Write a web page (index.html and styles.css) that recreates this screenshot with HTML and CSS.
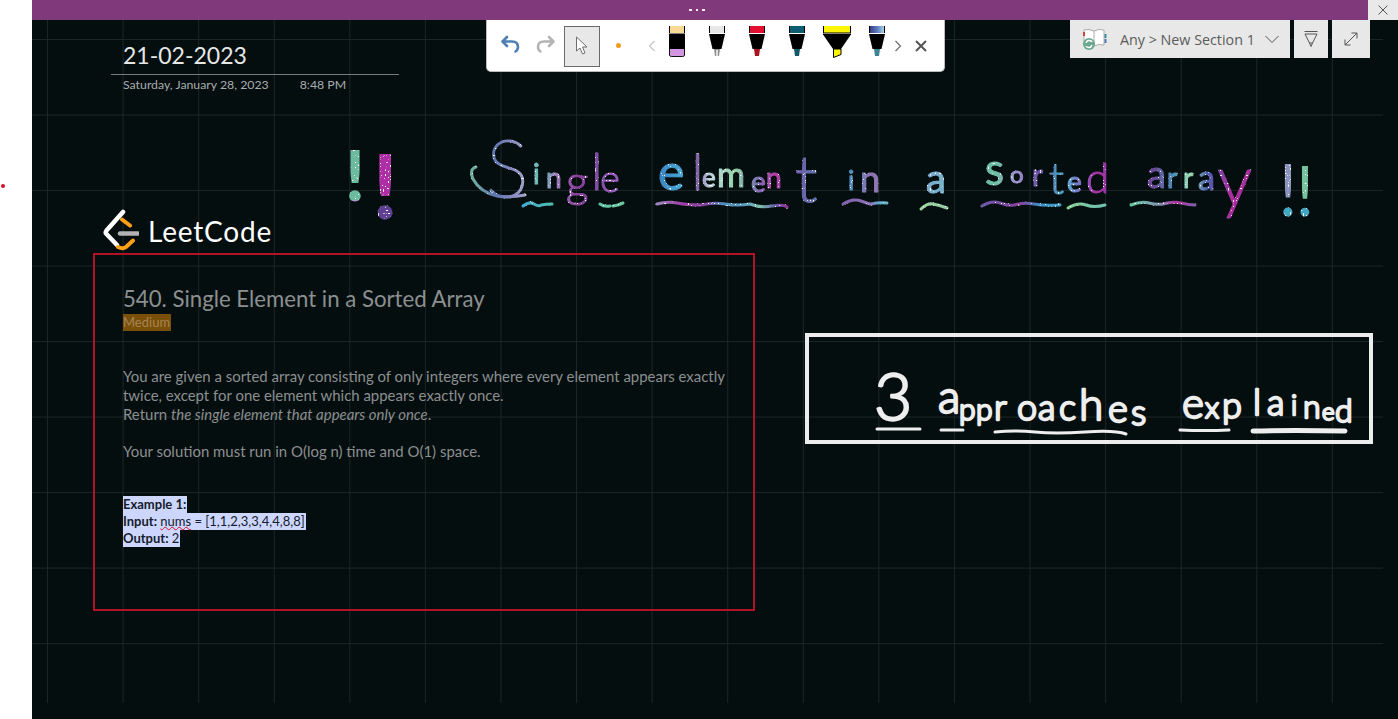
FILE: index.html
```html
<!DOCTYPE html>
<html lang="en">
<head>
<meta charset="utf-8">
<title>21-02-2023 - OneNote</title>
<link rel="stylesheet" href="styles.css">
</head>
<body>
<div class="app">
  <aside class="gutter"><span class="gutter-dot"></span></aside>
  <div class="window">
    <header class="titlebar">
      <span class="grip">
        <i></i><i></i><i></i>
      </span>
      <button class="win-close" aria-label="Close">
        <svg width="10" height="10" viewBox="0 0 10 10"><path class="ic-thin" d="M.5.5l9 9M9.5.5l-9 9"/></svg>
      </button>
    </header>
    <main class="canvas">
      <div class="grid"></div>

      <section class="note-title">
        <h1 class="page-name">21-02-2023</h1>
        <div class="page-meta"><span>Saturday, January 28, 2023</span><span>8:48 PM</span></div>
      </section>

      <div class="logo">
        <svg width="36" height="42" viewBox="0 0 36 42">
          <path class="lg-white" d="M20 3 3.500 21.500q-1.500 2 0 3.500L14 36"/>
          <path class="lg-orange" d="M19 10.500l8 6M15 38q5 2.500 8 0l7-6.500"/>
          <path class="lg-gray" d="M17 24.500h18"/>
        </svg>
        <span class="logo-text">LeetCode</span>
      </div>

      <section class="problem">
        <h2 class="p-title">540. Single Element in a Sorted Array</h2>
        <div class="p-level"><span>Medium</span></div>
        <p class="p-text">You are given a sorted array consisting of only integers where every element appears exactly<br>twice, except for one element which appears exactly once.<br>Return <em>the single element that appears only once</em>.</p>
        <p class="p-text p-gap">Your solution must run in O(log n) time and O(1) space.</p>
        <div class="p-example">
          <div class="ex-line"><span class="sel"><b>Example 1:</b></span></div>
          <div class="ex-line top"><span class="sel"><b>Input:</b> <u class="spell">nums</u> = [1,1,2,3,3,4,4,8,8]</span></div>
          <div class="ex-line"><span class="sel"><b>Output:</b> 2</span></div>
        </div>
      </section>

      <div class="approach-box"></div>

      <svg class="ink" width="1366" height="699" viewBox="32 20 1366 699">
        <defs>
          <linearGradient id="inkG" gradientUnits="userSpaceOnUse" x1="400" y1="0" x2="1400" y2="0">
            <stop offset=".07" stop-color="#6fb39b"/><stop offset=".095" stop-color="#5f75b0"/><stop offset=".115" stop-color="#8e8ec4"/><stop offset=".13" stop-color="#a9b0c8"/><stop offset=".14" stop-color="#4fbfb0"/><stop offset=".155" stop-color="#a083c0"/><stop offset=".178" stop-color="#8a3d9c"/><stop offset=".2" stop-color="#7d4fa5"/><stop offset=".212" stop-color="#a05ac0"/><stop offset=".26" stop-color="#3a86c4"/><stop offset=".282" stop-color="#48a8d4"/><stop offset=".297" stop-color="#8660a8"/><stop offset=".31" stop-color="#bcd6e0"/><stop offset=".335" stop-color="#92d4a8"/><stop offset=".357" stop-color="#7a74b4"/><stop offset=".375" stop-color="#b93ba8"/><stop offset=".4" stop-color="#6a62a8"/><stop offset=".45" stop-color="#4d8fc0"/><stop offset=".47" stop-color="#9070b0"/><stop offset=".535" stop-color="#7ab0d0"/><stop offset=".595" stop-color="#6cc0a0"/><stop offset=".617" stop-color="#a090d0"/><stop offset=".64" stop-color="#6b4fa8"/><stop offset=".658" stop-color="#4a9cc0"/><stop offset=".668" stop-color="#5fa8d8"/><stop offset=".695" stop-color="#a830a8"/><stop offset=".755" stop-color="#6a4a96"/><stop offset=".775" stop-color="#4a98c0"/><stop offset=".79" stop-color="#a0e0b0"/><stop offset=".807" stop-color="#4a5fb0"/><stop offset=".83" stop-color="#a82f9e"/>
          </linearGradient>
          <linearGradient id="underG" gradientUnits="userSpaceOnUse" x1="400" y1="0" x2="1400" y2="0">
            <stop offset=".123" stop-color="#3fa8d0"/><stop offset=".152" stop-color="#50c0b0"/><stop offset=".223" stop-color="#6ac8a0"/><stop offset=".257" stop-color="#9a86b8"/><stop offset=".28" stop-color="#a040a8"/><stop offset=".305" stop-color="#8a40a0"/><stop offset=".325" stop-color="#4a90c0"/><stop offset=".345" stop-color="#5aa0c0"/><stop offset=".36" stop-color="#80c0a8"/><stop offset=".375" stop-color="#6060a8"/><stop offset=".387" stop-color="#9a3098"/><stop offset=".443" stop-color="#8060b0"/><stop offset=".47" stop-color="#9070b8"/><stop offset=".48" stop-color="#60b0d0"/><stop offset=".52" stop-color="#a0d8a0"/><stop offset=".547" stop-color="#90c8a0"/><stop offset=".582" stop-color="#6a58a8"/><stop offset=".62" stop-color="#8a3fa0"/><stop offset=".64" stop-color="#3a90c8"/><stop offset=".66" stop-color="#40a0c8"/><stop offset=".667" stop-color="#80d090"/><stop offset=".7" stop-color="#70c0b0"/><stop offset=".73" stop-color="#60c8a0"/><stop offset=".76" stop-color="#8090b0"/><stop offset=".775" stop-color="#b030a0"/><stop offset=".795" stop-color="#8060a8"/>
          </linearGradient>
          <linearGradient id="bangA" gradientUnits="userSpaceOnUse" x1="0" y1="140" x2="0" y2="215">
            <stop offset=".8" stop-color="#6dbb9f"/><stop offset=".8" stop-color="#a796c4"/>
          </linearGradient>
          <linearGradient id="bangB" gradientUnits="userSpaceOnUse" x1="0" y1="140" x2="0" y2="225">
            <stop offset=".75" stop-color="#ae2ea6"/><stop offset=".75" stop-color="#5f3f90"/>
          </linearGradient>
          <linearGradient id="bangC" gradientUnits="userSpaceOnUse" x1="0" y1="160" x2="0" y2="220">
            <stop offset=".75" stop-color="#8a94bc"/><stop offset=".75" stop-color="#3fa6c2"/>
          </linearGradient>
          <linearGradient id="bangD" gradientUnits="userSpaceOnUse" x1="0" y1="160" x2="0" y2="220">
            <stop offset=".75" stop-color="#74c39c"/><stop offset=".75" stop-color="#3fa6c2"/>
          </linearGradient>
          <filter id="glitter" x="-5%" y="-5%" width="110%" height="110%">
            <feTurbulence type="fractalNoise" baseFrequency="0.6" numOctaves="1" seed="4" result="n"/>
            <feColorMatrix in="n" type="matrix" values="0 0 0 0 1  0 0 0 0 1  0 0 0 0 1  0 0 0 16 -10.400" result="s"/>
            <feComposite in="s" in2="SourceAlpha" operator="in" result="spark"/>
            <feMerge><feMergeNode in="SourceGraphic"/><feMergeNode in="spark"/></feMerge>
          </filter>
        </defs>

        <g class="glit">
          <text class="bang fill-a" x="355" y="201" font-size="70">!</text>
          <text class="bang fill-b" x="385" y="219" font-size="90">!</text>

          <path class="swash" d="M476 167q-7 2-3 12 7 13 24 17 14 2 28-1"/>
          <g class="hand">
            <text class="w"><tspan class="thin" x="486" y="197" font-size="80">S</tspan><tspan x="533" y="184" font-size="28">i</tspan><tspan x="546" y="188" font-size="28">n</tspan><tspan class="lt" x="566" y="197" font-size="44">g</tspan><tspan class="lt" x="591" y="190" font-size="52">l</tspan><tspan class="lt" x="600" y="192" font-size="38">e</tspan></text>
            <text class="w"><tspan x="658" y="190" font-size="50">e</tspan><tspan class="lt" x="692" y="190" font-size="50">l</tspan><tspan x="702" y="187" font-size="26">e</tspan><tspan x="717" y="187" font-size="34">m</tspan><tspan x="751" y="192" font-size="28">e</tspan><tspan x="766" y="188" font-size="28">n</tspan><tspan class="lt" x="795" y="202" font-size="66">t</tspan></text>
            <text class="w"><tspan x="848" y="190" font-size="26">i</tspan><tspan x="860" y="192" font-size="36">n</tspan></text>
            <text class="w" x="926" y="193" font-size="40">a</text>
            <text class="w"><tspan x="985" y="185" font-size="44">s</tspan><tspan x="1010" y="183" font-size="24">o</tspan><tspan x="1032" y="186" font-size="30">r</tspan><tspan class="lt" x="1049" y="194" font-size="44">t</tspan><tspan x="1067" y="192" font-size="28">e</tspan><tspan class="lt" x="1086" y="193" font-size="42">d</tspan></text>
            <text class="w"><tspan x="1147" y="188" font-size="38">a</tspan><tspan x="1167" y="188" font-size="28">r</tspan><tspan x="1183" y="188" font-size="28">r</tspan><tspan x="1198" y="190" font-size="34">a</tspan><tspan class="lt" x="1217" y="205" font-size="70">y</tspan></text>
          </g>
          <text class="bang-thin fill-c" x="1288" y="216" font-size="72">!</text>
          <text class="bang-thin fill-d" x="1305" y="216" font-size="70">!</text>

          <path class="under" d="M523 206q6-5 11-2t7 1q5-1 11-1"/>
          <path class="under" d="M600 204q4 3 10 2M613 206l5-1M618 205l5-2"/>
          <path class="under" d="M657 204q10-3 20-1t24 2q12-3 24-1t25 0q10 4 22 2t15 1"/>
          <path class="under" d="M843 204q10-6 18-3t10 3q8-2 16-1"/>
          <path class="under" d="M921 209q6-6 12-5t14 4"/>
          <path class="under" d="M982 206q10-6 18-3t14 2q10-3 20-1t26 1"/>
          <path class="under" d="M1068 208q10-6 18-3t19 0"/>
          <path class="under" d="M1131 205q10-4 18-2t14 1q10-3 18-1t14 2"/>
        </g>

        <g class="white-ink">
          <text x="874" y="420" font-size="66">3</text>
          <text><tspan x="938" y="413" font-size="46">a</tspan><tspan x="959" y="420" font-size="30">p</tspan><tspan x="976" y="420" font-size="30">p</tspan><tspan x="994" y="420" font-size="36">r</tspan><tspan x="1017" y="420" font-size="36">o</tspan><tspan x="1038" y="420" font-size="36">a</tspan><tspan x="1059" y="420" font-size="36">c</tspan><tspan x="1079" y="420" font-size="44">h</tspan><tspan x="1108" y="422" font-size="38">e</tspan><tspan x="1131" y="425" font-size="36">s</tspan></text>
          <text><tspan x="1182" y="418" font-size="42">e</tspan><tspan x="1205" y="418" font-size="30">x</tspan><tspan x="1222" y="418" font-size="36">p</tspan><tspan x="1253" y="415" font-size="36">l</tspan><tspan x="1267" y="415" font-size="36">a</tspan><tspan x="1291" y="415" font-size="28">i</tspan><tspan x="1303" y="418" font-size="32">n</tspan><tspan x="1322" y="420" font-size="24">e</tspan><tspan x="1335" y="422" font-size="32">d</tspan></text>
          <path class="white-line" d="M877 429h43M941 430h22"/>
          <path class="white-line" d="M995 432q20-2 40 0t50 0q30-2 41 2"/>
          <path class="white-line" d="M1180 430q25 1 49 0"/>
          <path class="white-line wide" d="M1253 431q40-1 92 0"/>
        </g>
      </svg>

      <aside class="toolbar">
        <button class="tb-ic undo" aria-label="Undo">
          <svg width="24" height="24" viewBox="0 0 24 24"><path class="ic-undo" d="M9 5 4.500 9.500 9 14M5 9.500h9q6 0 6 5.500 0 3-2.500 4.500"/></svg>
        </button>
        <button class="tb-ic redo" aria-label="Redo">
          <svg width="24" height="24" viewBox="0 0 24 24"><path class="ic-redo" d="M15 5l4.500 4.500L15 14M19 9.500h-9q-6 0-6 5.500 0 3 2.500 4.500"/></svg>
        </button>
        <button class="tb-select" aria-label="Select">
          <svg width="14" height="20" viewBox="0 0 14 20"><path class="ic-cursor" d="M1.500 1v14l3.500-3 2.500 6 2.500-1-2.500-6h4.500z"/></svg>
        </button>
        <span class="tb-size"><i></i></span>
        <span class="tb-chev">
          <svg width="8" height="14" viewBox="0 0 8 14"><path class="ic-chev light" d="M6.500 2 1.500 7l5 5"/></svg>
        </span>
        <div class="pens">
          <svg class="pen" viewBox="0 0 16 31"><rect class="k" width="16" height="7.500"/><rect class="c-sand" x="1" width="14" height="7"/><rect class="k" y="8" width="16" height="15"/><path class="c-pink" d="M1 23h14v6q0 1.500-1.500 1.500h-11Q1 30.500 1 29z"/><path class="k-line" d="M.5 23v6q0 1.500 2 1.500h11q2 0 2-1.500v-6"/></svg>
          <svg class="pen" viewBox="0 0 16 31"><rect class="k" width="16" height="7"/><rect class="c-light" x="1" width="14" height="7"/><path class="k" d="M0 8h16l-3.500 15h-9z"/><path class="c-gray" d="M5 23h6l-1 7H6z"/><path class="c-w" d="M7.300 24h1.400v6H7.300z"/></svg>
          <svg class="pen" viewBox="0 0 16 31"><rect class="k" width="16" height="7"/><rect class="c-red" x="1" width="14" height="7"/><path class="k" d="M0 8h16l-3.500 15h-9z"/><path class="c-dred" d="M5 23h6l-1 7H6z"/></svg>
          <svg class="pen" viewBox="0 0 16 31"><rect class="k" width="16" height="7"/><rect class="c-teal" x="1" width="14" height="7"/><path class="k" d="M0 8h16l-3.500 15h-9z"/><path class="c-dteal" d="M5 23h6l-1 7H6z"/></svg>
          <svg class="pen pen-wide" viewBox="0 0 28 32"><rect class="k" width="28" height="7"/><rect class="c-yel" x="1" width="26" height="6.500"/><path class="k" d="M0 7.500h28v1L18 23h-8L0 8.500z"/><path class="c-yel k-edge" d="M10.500 23h7.500v5.500l-7.500 3z"/></svg>
          <svg class="pen" viewBox="0 0 16 31"><defs><linearGradient id="galaxy" x1="0" y1="0" x2="1" y2="0"><stop offset="0" stop-color="#3b3a85"/><stop offset=".55" stop-color="#5f80c4"/><stop offset="1" stop-color="#a8d8df"/></linearGradient></defs><rect class="k" width="16" height="7"/><rect class="c-galaxy" x="1" width="14" height="7"/><path class="k" d="M0 8h16l-3.500 15h-9z"/><path class="c-steel" d="M5 23h6l-1 7H6z"/></svg>
        </div>
        <span class="tb-chev next">
          <svg width="8" height="14" viewBox="0 0 8 14"><path class="ic-chev" d="M1.500 2l5 5-5 5"/></svg>
        </span>
        <button class="tb-close" aria-label="Close toolbar">
          <svg width="12" height="12" viewBox="0 0 12 12"><path class="ic-x" d="M1 1l10 10M11 1 1 11"/></svg>
        </button>
      </aside>

      <nav class="doc-actions">
        <button class="dock notebook">
          <svg width="26" height="24" viewBox="0 0 26 24">
            <path class="bk-page" d="M2 3q5-1.500 10 1 5-2.500 10-1v15q-5-1.500-10 1-5-2.500-10-1z"/>
            <path class="bk-line" d="M12 4v15"/>
            <rect class="bk-red" x="1" y="5" width="2" height="4"/>
            <rect class="bk-teal" x="22.500" y="7" width="2" height="4"/>
            <rect class="bk-blue" x="22.500" y="12" width="2" height="4"/>
            <circle class="bk-sync" cx="7" cy="17" r="6"/>
            <path class="bk-arrows" d="M4 16q1-3 3.500-2.500t2.500 1.500M10 18q-1 3-3.500 2.500T4 19"/>
          </svg>
          <span class="nb-label">Any &gt; New Section 1</span>
          <svg class="nb-chev" width="16" height="10" viewBox="0 0 16 10"><path class="ic-thin" d="M1.500 2 8 8.500 14.500 2"/></svg>
        </button>
        <button class="dock square" aria-label="Pen">
          <svg width="14" height="16" viewBox="0 0 14 16"><path class="ic-thin" d="M.5.500h13M1 3h12L8.500 12h-3zM5.500 12 7 15.500 8.500 12"/></svg>
        </button>
        <button class="dock square wide" aria-label="Expand">
          <svg width="14" height="14" viewBox="0 0 14 14"><path class="ic-thin" d="M1 13 13 1M7.500 1H13v5.500M1 7.500V13h5.500"/></svg>
        </button>
      </nav>
    </main>
  </div>
</div>
</body>
</html>
```
FILE: styles.css
```css
* { box-sizing: border-box; }
html, body { margin: 0; height: 100%; overflow: hidden; background: #fff; }
button { border: 0; padding: 0; background: none; font: inherit; }

.app { display: flex; width: 1398px; height: 719px; font-family: "Lato", "Liberation Sans", sans-serif; }
.gutter { position: relative; flex: 0 0 32px; background: #fff; }
.gutter-dot { position: absolute; left: 1px; top: 184px; width: 4px; height: 4px; border-radius: 50%; background: #d3112a; }
.window { flex: 1; display: flex; flex-direction: column; min-width: 0; }

.titlebar { position: relative; flex: 0 0 20px; display: flex; justify-content: center; align-items: center; background: #80397b; }
.grip { display: flex; gap: 4px; margin-right: 36px; }
.grip i { width: 2.500px; height: 2.500px; background: #f4e8f3; }
.win-close { position: absolute; right: 0; top: 0; width: 30px; height: 20px; background: #e9e9e9; display: flex; align-items: center; justify-content: center; }

.canvas { position: relative; flex: 1; background: #040e0f; overflow: hidden; }
.grid {
  position: absolute; left: 0; top: 0; width: 1351px; height: 683px;
  background-image: linear-gradient(to right, #1c2525 1px, transparent 1px), linear-gradient(to bottom, #1c2525 1px, transparent 1px);
  background-size: 75.59px 75.53px;
  background-position: 15px 0, 0 19px;
}

.note-title { position: absolute; left: 79px; top: 19px; width: 288px; color: #a8adad; }
.page-name { margin: 0; padding: 0 0 3px 12px; font-weight: 400; font-size: 23px; line-height: 32px; color: #e6e8e8; border-bottom: 1px solid #777c7c; }
.page-meta { display: flex; gap: 31px; padding: 2px 0 0 12px; font-size: 12.300px; line-height: 15px; }

.logo { position: absolute; left: 71px; top: 188px; display: flex; align-items: center; gap: 9px; }
.logo-text { font-size: 28px; line-height: 42px; color: #fff; font-weight: 400; letter-spacing: .8px; padding-top: 2px; }
.lg-white, .lg-orange, .lg-gray { fill: none; stroke-linecap: round; stroke-linejoin: round; }
.lg-white { stroke: #fff; stroke-width: 4.500; }
.lg-orange { stroke: #ffa116; stroke-width: 4; }
.lg-gray { stroke: #b3b3b3; stroke-width: 4.500; }

.problem { position: absolute; left: 61px; top: 233px; width: 662px; height: 358px; padding: 30px 0 0 28px; border: 2px solid #b11226; color: #8c8f8f; }
.p-title { margin: 0; font-weight: 400; font-size: 22.200px; line-height: 28px; color: #8c8f8f; }
.p-level { display: flex; line-height: 17px; font-size: 13px; margin-top: 1px; }
.p-level span { background: #7a4f08; color: #a58555; padding: 0 1px 0 0; }
.p-text { margin: 36px 0 0; font-size: 14.950px; line-height: 19px; }
.p-gap { margin-top: 18px; }
.p-example { margin-top: 35px; font-size: 13px; line-height: 17px; color: #161c2a; }
.ex-line { position: relative; }
.ex-line.top { z-index: 1; }
.sel { display: inline-block; background: #ccd6ff; padding-right: 1px; }
.spell { text-decoration: underline wavy #d3112a 1px; text-underline-offset: 0; }

.approach-box { position: absolute; left: 773px; top: 313px; width: 568px; height: 111px; border: 4px solid #eceeee; }

.ink { position: absolute; left: 0; top: 0; pointer-events: none; }
.glit { filter: url(#glitter); }
.hand { font-family: "Lato", sans-serif; fill: url(#inkG); stroke: url(#inkG); stroke-width: 1; stroke-linejoin: round; }
.hand .lt { font-weight: 300; }
.hand .thin { font-weight: 100; stroke-width: 2; }
.bang, .bang-thin { font-family: "Lato", sans-serif; text-anchor: middle; }
.bang { font-weight: 900; }
.bang-thin { font-weight: 400; }
.fill-a { fill: url(#bangA); }
.fill-b { fill: url(#bangB); }
.fill-c { fill: url(#bangC); }
.fill-d { fill: url(#bangD); }
.swash, .under { fill: none; stroke-linecap: round; stroke-linejoin: round; }
.swash { stroke: url(#inkG); stroke-width: 3; }
.under { stroke: url(#underG); stroke-width: 3; }
.white-ink { font-family: "Lato", sans-serif; font-weight: 300; fill: #eeeeee; stroke: #eeeeee; stroke-width: 2.300; stroke-linejoin: round; }
.white-line { fill: none; stroke: #eeeeee; stroke-width: 3; stroke-linecap: round; }
.white-line.wide { stroke-width: 5; }

.toolbar { position: absolute; left: 454px; top: 0; width: 459px; height: 52px; display: flex; align-items: center; padding-left: 11px; background: #fff; border: 1px solid #b9bcbc; border-top: 0; border-radius: 0 0 5px 5px; }
.tb-ic { width: 24px; height: 24px; margin-right: 12px; margin-top: -3px; display: block; }
.tb-ic.redo { margin-right: 6px; }
.ic-undo, .ic-redo { fill: none; stroke-width: 2.600; stroke-linecap: round; stroke-linejoin: round; }
.ic-undo { stroke: #4f80b5; }
.ic-redo { stroke: #b4b4b4; }
.tb-select { width: 36px; height: 41px; background: #e8e8e8; border: 1px solid #6a6a6a; display: flex; align-items: center; justify-content: center; margin-top: 1px; }
.ic-cursor { fill: #fff; stroke: #6d6d6d; stroke-width: 1; stroke-linejoin: round; }
.tb-size { width: 36px; display: flex; justify-content: center; }
.tb-size i { width: 5px; height: 5px; border-radius: 50%; background: #f39c1f; }
.tb-chev { width: 11px; margin-left: 10px; display: flex; justify-content: center; }
.tb-chev.next { margin-left: 7px; }
.ic-chev { fill: none; stroke: #666; stroke-width: 1.100; }
.ic-chev.light { stroke: #c4c4c4; }
.pens { display: flex; gap: 24px; margin-left: 12px; align-self: flex-start; margin-top: 6px; }
.pen { display: block; width: 16px; height: 31px; }
.pen-wide { width: 28px; height: 32px; margin: 0 -6px; }
.k { fill: #000; }
.k-line { fill: none; stroke: #111; stroke-width: 1; }
.k-edge { stroke: #000; stroke-width: 1; }
.c-sand { fill: #f8d996; }
.c-pink { fill: #d196df; }
.c-light { fill: #e8e8e8; }
.c-gray { fill: #8d8d8d; }
.c-w { fill: #fff; }
.c-red { fill: #e3102f; }
.c-dred { fill: #a9151f; }
.c-teal { fill: #0f5d75; }
.c-dteal { fill: #14596b; }
.c-yel { fill: #fff500; }
.c-steel { fill: #3f8397; }
.c-galaxy { fill: url(#galaxy); }
.tb-close { width: 20px; height: 20px; margin-left: 8px; display: flex; align-items: center; justify-content: center; }
.ic-x { fill: none; stroke: #555; stroke-width: 2; }

.doc-actions { position: absolute; left: 1038px; top: 0; display: flex; gap: 4px; }
.dock { height: 38px; background: #e8e8e8; display: flex; align-items: center; justify-content: center; }
.notebook { width: 220px; justify-content: flex-start; padding-left: 12px; color: #5c5c5c; font-size: 15px; }
.square { width: 34px; }
.square.wide { width: 38px; }
.nb-label { margin-left: 12px; font-family: "Open Sans", sans-serif; font-size: 14.300px; white-space: nowrap; }
.nb-chev { margin-left: 9px; }
.ic-thin { fill: none; stroke: #555; stroke-width: 1; }
.bk-page { fill: #fff; stroke: #9a9a9a; stroke-width: .8; }
.bk-line { stroke: #9a9a9a; stroke-width: .8; }
.bk-red { fill: #c9453f; }
.bk-teal { fill: #3d8b9a; }
.bk-blue { fill: #4a78b8; }
.bk-sync { fill: #6aa88f; }
.bk-arrows { fill: none; stroke: #fff; stroke-width: 1.400; }
```
